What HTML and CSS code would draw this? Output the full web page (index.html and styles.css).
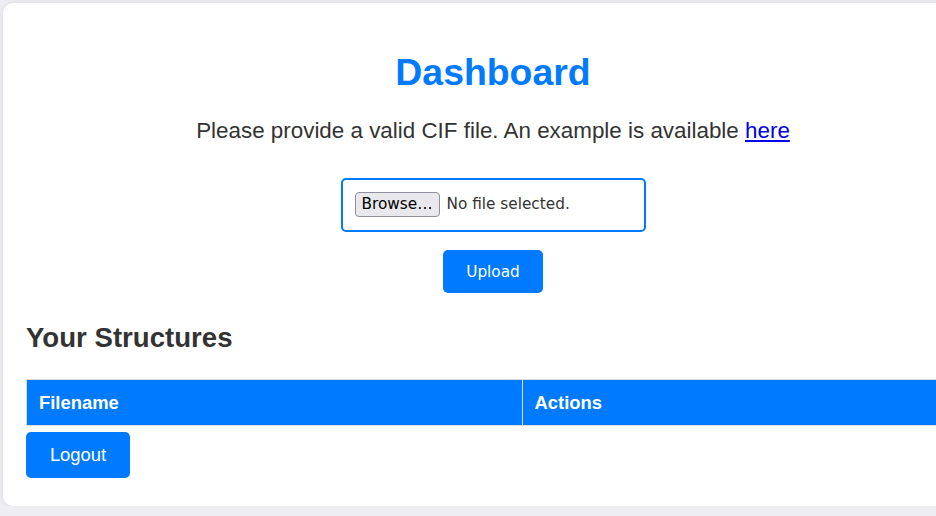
FILE: index.html
```html
<!DOCTYPE html>
<html lang="en">
<head>
<meta charset="utf-8">
<title>Dashboard</title>
<link rel="stylesheet" href="styles.css">
</head>
<body>
  <main class="card">
    <h1 class="title">Dashboard</h1>
    <p class="intro">Please provide a valid CIF file. An example is available <a href="#" class="link">here</a></p>

    <form class="upload-form">
      <label class="file-box">
        <span class="file-button">Browse…</span>
        <span class="file-status">No file selected.</span>
      </label>
      <button type="button" class="btn btn-upload">Upload</button>
    </form>

    <h2 class="section-title">Your Structures</h2>
    <table class="structures">
      <thead>
        <tr>
          <th>Filename</th>
          <th>Actions</th>
        </tr>
      </thead>
      <tbody></tbody>
    </table>

    <button type="button" class="btn btn-logout">Logout</button>
  </main>
</body>
</html>
```

FILE: styles.css
```css
html {
  overflow: hidden;
}

body {
  margin: 0;
  background: #eeeef2;
  font-family: "Liberation Sans", Arial, sans-serif;
  font-size: 18.4px;
  color: #333;
}

.card {
  box-sizing: border-box;
  width: 980px;
  margin: 3px 0 0 3px;
  padding: 23px 23px 28px;
  background: #fff;
  border-radius: 10px;
  box-shadow: 0 0 5px rgba(0, 0, 0, 0.1);
}

.title {
  margin: 25px 0 25px;
  font-size: 37.4px;
  font-weight: bold;
  line-height: 42px;
  color: #007bff;
  text-align: center;
}

.intro {
  margin: 0 0 35px;
  font-size: 22.4px;
  line-height: 25px;
  color: #333;
  text-align: center;
}

.link {
  color: #0000ee;
  text-decoration: underline;
}

.upload-form {
  display: flex;
  flex-direction: column;
  align-items: center;
  gap: 18px;
}

.file-box {
  box-sizing: border-box;
  width: 305px;
  height: 54px;
  padding: 12px;
  border: 2px solid #007bff;
  border-radius: 5px;
  display: flex;
  align-items: flex-start;
  gap: 7px;
  font-family: "DejaVu Sans", sans-serif;
  font-size: 15.3px;
}

.file-button {
  box-sizing: border-box;
  height: 25px;
  padding: 0 6px;
  line-height: 23px;
  background: #e9e9ed;
  border: 1px solid #8f8f9d;
  border-radius: 4px;
  color: #000;
}

.file-status {
  line-height: 25px;
  color: #333;
}

.btn {
  border: none;
  background: #007bff;
  color: #fff;
  cursor: pointer;
}

.btn-upload {
  width: 100px;
  height: 43px;
  border-radius: 5px;
  font-family: "DejaVu Sans", sans-serif;
  font-size: 15.3px;
}

.section-title {
  margin: 29px 0 25px;
  font-size: 27.6px;
  font-weight: bold;
  line-height: 32px;
  color: #333;
}

.structures {
  width: 100%;
  border-collapse: collapse;
  margin-bottom: 6px;
}

.structures th {
  padding: 12px;
  border: 1px solid #ddd;
  background: #007bff;
  color: #fff;
  font-size: 18.4px;
  font-weight: bold;
  line-height: 21px;
  text-align: left;
}

.btn-logout {
  display: block;
  width: 104px;
  height: 46px;
  border-radius: 5px;
  font-family: "Liberation Sans", Arial, sans-serif;
  font-size: 18.4px;
}
```
